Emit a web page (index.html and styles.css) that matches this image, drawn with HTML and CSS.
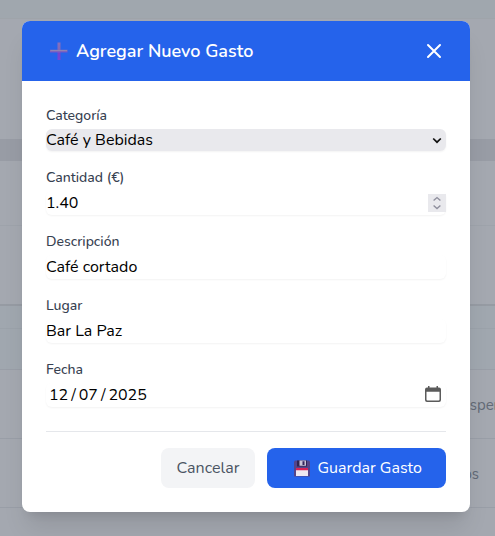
FILE: index.html
```html
<!DOCTYPE html>
<html lang="es">
<head>
<meta charset="utf-8">
<title>Agregar Nuevo Gasto</title>
<link rel="stylesheet" href="styles.css">
</head>
<body>
<div class="page">
  <div class="bg bg-top"></div>
  <div class="bg bg-card"></div>
  <div class="bg bg-band"></div>
  <div class="bg bg-stats"></div>
  <div class="bg bg-list"></div>
  <div class="bg bg-gap"></div>
  <div class="bg bg-head"></div>
  <div class="bg bg-row"><span class="clip-a">esper</span></div>
  <div class="bg bg-row"><span class="clip-b">os</span></div>
  <div class="bg bg-rest"></div>
</div>
<div class="overlay">
  <div class="modal">
    <header class="header">
      <svg class="plus" width="18" height="18" viewBox="0 0 18 18">
        <defs><linearGradient id="pg" x1="0" y1="0" x2="0" y2="1"><stop offset="0" stop-color="#8870bd"/><stop offset=".5" stop-color="#8068ba"/><stop offset=".62" stop-color="#7144d4"/><stop offset="1" stop-color="#7846d4"/></linearGradient></defs>
        <path fill="url(#pg)" d="M7.500.5h3v7.200H17.500v2.800h-7v7.500h-3v-7.500H0V7.700h7.500z"/>
        <path fill="none" stroke="#8f83b5" stroke-width="1" d="M.5 8.500h16.500"/>
      </svg>
      <h1 class="title">Agregar Nuevo Gasto</h1>
      <svg class="close" width="24" height="24" viewBox="0 0 24 24" fill="none" stroke="#fff" stroke-width="2" stroke-linecap="round"><path d="M6 18 18 6M6 6l12 12"/></svg>
    </header>
    <div class="body">
      <div class="field">
        <div class="label">Categoría</div>
        <div class="control select"><span>Café y Bebidas</span>
          <svg class="chev" width="10" height="8" viewBox="0 0 10 8" fill="none" stroke="#111" stroke-width="1.700"><path d="m1.200 1.500 3.800 3.700L8.800 1.500"/></svg>
        </div>
      </div>
      <div class="field">
        <div class="label">Cantidad (€)</div>
        <div class="control"><span>1.40</span>
          <span class="spin"><svg width="18" height="18" viewBox="0 0 18 18" fill="none" stroke="#8f8f9d" stroke-width="1.400"><path d="m5.600 6.600 3.400-3 3.400 3M5.600 11.500l3.400 3 3.400-3"/></svg></span>
        </div>
      </div>
      <div class="field">
        <div class="label">Descripción</div>
        <div class="control"><span>Café cortado</span></div>
      </div>
      <div class="field">
        <div class="label">Lugar</div>
        <div class="control"><span>Bar La Paz</span></div>
      </div>
      <div class="field">
        <div class="label">Fecha</div>
        <div class="control date"><span>12</span><span class="sep">/</span><span>07</span><span class="sep">/</span><span>2025</span>
          <svg class="cal" width="16" height="16" viewBox="0 0 16 16"><path fill="#5b5b5b" fill-rule="evenodd" d="M3 0h1.500v1.500h7V0H13v1.500h1a2 2 0 0 1 2 2V14a2 2 0 0 1-2 2H2a2 2 0 0 1-2-2V3.500a2 2 0 0 1 2-2h1zM1.500 5.700v7.800a1 1 0 0 0 1 1h11a1 1 0 0 0 1-1V5.700z"/></svg>
        </div>
      </div>
      <footer class="footer">
        <div class="btn cancel">Cancelar</div>
        <div class="btn save">
          <svg class="disk" width="16" height="17" viewBox="0 0 16 17">
            <path fill="#54458a" d="M1 .5h14l1 1V16l-.5.5H.5L0 16V1.500z"/>
            <path fill="#302451" d="M3 .5h10v6H3z"/>
            <path fill="#c9c3d8" d="M5.500.5h6.500v5.300H5.500z"/>
            <path fill="#35265c" d="M8.500 1.200h2v3.800h-2z"/>
            <path fill="#eee9f1" d="M2 8h12v8H2z"/>
            <path fill="#d92355" d="M2 8h12v2.200H2z"/>
          </svg>
          <span>Guardar Gasto</span>
        </div>
      </footer>
    </div>
  </div>
</div>
</body>
</html>
```
FILE: styles.css
```css
* { box-sizing: border-box; }
body {
  margin: 0;
  height: 536px;
  overflow: hidden;
  font-family: Nunito, Lato, "Noto Sans", sans-serif;
  font-size: 16px;
  line-height: 24px;
  color: #000;
}
.page { height: 536px; background: #a4a8b0; }
.bg { border-bottom: 1px solid #999ea7; }
.bg-top { height: 19px; background: #a0a7ae; border-color: #9fa4aa; }
.bg-card { height: 120px; border: 0; }
.bg-band { height: 22px; background: #989ca5; border: 0; }
.bg-stats { height: 65px; border-color: #9ea3ab; }
.bg-list { height: 80px; border-bottom: 2px solid #969ba3; }
.bg-gap { height: 23px; background: #a0a7af; border-color: #9ba2aa; }
.bg-head { height: 41px; background: #a0a7af; }
.bg-row { height: 69px; padding-top: 23px; font-size: 15px; color: #626a76; text-align: right; }
.bg-rest { border: 0; }
.clip-a { margin-right: -4px; }
.clip-b { margin-right: 16px; }
.overlay {
  position: absolute;
  inset: 0;
  display: flex;
  justify-content: center;
  padding: 21px 3px 0 0;
  align-items: flex-start;
  overflow: hidden;
}
.modal {
  width: 448px;
  height: 491px;
  border-radius: 8px;
  overflow: hidden;
  background: #fff;
  box-shadow: 0 20px 25px -5px rgba(0, 0, 0, .1), 0 8px 10px -6px rgba(0, 0, 0, .1);
}
.header {
  display: flex;
  align-items: center;
  height: 60px;
  padding: 0 24px 0 28px;
  background: #2563eb;
  color: #fff;
}
.plus { margin-right: 8px; }
.title { margin: 0; font-size: 18px; line-height: 28px; font-weight: 600; white-space: nowrap; }
.close { margin-left: auto; }
.body { padding: 24px; }
.field { margin-bottom: 16px; }
.label { height: 20px; padding-top: 1px; margin-bottom: 4px; font-size: 14px; line-height: 20px; font-weight: 500; color: #374151; }
.control {
  display: flex;
  align-items: center;
  height: 24px;
  border-radius: 6px;
  box-shadow: 0 1px 2px rgba(0, 0, 0, .05);
  white-space: nowrap;
}
.select { height: 22px; background: #e9e9ed; }
.chev { margin: 2px 4px 0 auto; }
.spin { display: flex; margin-left: auto; background: #e9e9ed; }
.date { padding: 0 5px 0 3px; }
.sep { width: 10.500px; text-align: center; }
.cal { margin: -2px 0 0 auto; }
.footer { display: flex; justify-content: flex-end; gap: 12px; margin-top: 24px; padding-top: 16px; border-top: 1px solid #e5e7eb; }
.btn { display: flex; align-items: center; height: 40px; border-radius: 8px; white-space: nowrap; }
.cancel { width: 94px; justify-content: center; background: #f3f4f6; color: #4b5563; }
.save { width: 179px; padding-left: 27px; background: #2563eb; color: #fff; }
.disk { margin-right: 7.500px; }
```
